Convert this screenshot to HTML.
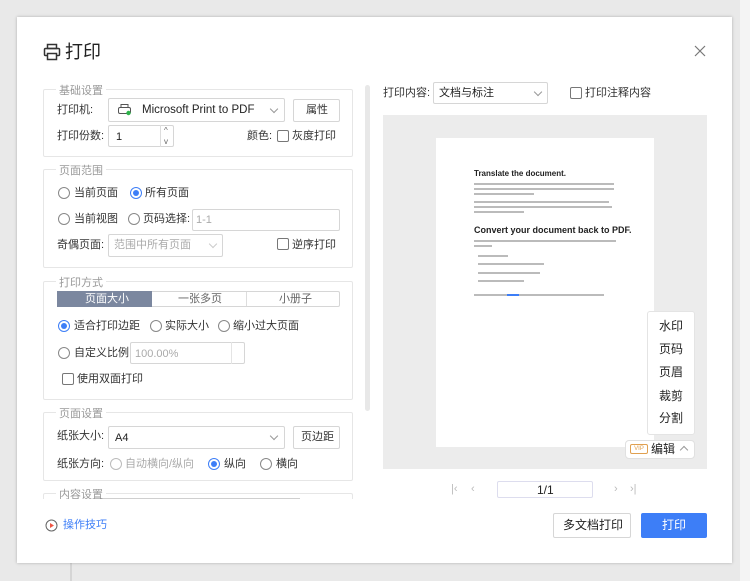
<!DOCTYPE html>
<html><head><meta charset="utf-8">
<style>
*{box-sizing:border-box;margin:0;padding:0}
body{width:750px;height:581px;background:#e9e9e9;position:relative;overflow:hidden;font-family:"Liberation Sans","Noto Sans CJK SC",sans-serif;font-size:11px;color:#333}
.a{position:absolute}
.dlg{left:17px;top:17px;width:715px;height:546px;background:#fff;box-shadow:0 0 3px rgba(0,0,0,.25)}
.fs{position:absolute;border:1px solid #e6e6e6;border-radius:2px}
.lg{position:absolute;top:-8px;left:12px;background:#fff;padding:0 3px;color:#999;font-size:11px}
.box{position:absolute;border:1px solid #d6d6d6;border-radius:2px;background:#fff}
.rad{position:absolute;width:12px;height:12px;border:1px solid #888;border-radius:50%;background:#fff}
.rad.on{border-color:#3d7ef7}
.rad.on::after{content:"";position:absolute;left:2px;top:2px;width:6px;height:6px;border-radius:50%;background:#3d7ef7}
.cb{position:absolute;width:12px;height:12px;border:1px solid #777;border-radius:2px;background:#fff}
.chev{position:absolute;width:6px;height:6px;border-right:1px solid #999;border-bottom:1px solid #999;transform:rotate(45deg)}
.t{position:absolute;white-space:nowrap;line-height:12px}
.g{color:#aaa}
.bar{position:absolute;height:1.6px;background:#bbb}
</style></head><body>
<div class="a" style="left:70px;top:563px;width:2px;height:18px;background:#d5d5d5"></div>
<div class="a" style="left:740px;top:0;width:10px;height:581px;background:#f4f4f4"></div>
<div class="a dlg"></div>

<svg class="a" style="left:43px;top:43px" width="18" height="18" viewBox="0 0 18 18" fill="none" stroke="#333" stroke-width="1.5"><rect x="4.5" y="1.5" width="9" height="4"/><rect x="1.5" y="5.5" width="15" height="7" rx="1"/><rect x="4.5" y="10.5" width="9" height="6" fill="#fff"/></svg>
<div class="t" style="left:65px;top:42px;font-size:18px;line-height:20px;color:#222">打印</div>
<svg class="a" style="left:694px;top:45px" width="12" height="12" viewBox="0 0 12 12" stroke="#777" stroke-width="1.2"><path d="M1 1L11 11M11 1L1 11"/></svg>

<div class="fs" style="left:43px;top:89px;width:310px;height:68px"><div class="lg">基础设置</div></div>
<div class="t" style="left:57px;top:104px">打印机:</div>
<div class="box" style="left:108px;top:98px;width:177px;height:24px"></div>
<svg class="a" style="left:118px;top:104px" width="14" height="12" viewBox="0 0 14 12"><rect x="3" y="0.5" width="7" height="3" fill="none" stroke="#555"/><rect x="0.5" y="3.5" width="12" height="6" rx="1.5" fill="none" stroke="#555"/><circle cx="10.5" cy="9" r="2.2" fill="#2db34a"/></svg>
<div class="t" style="left:142px;top:104px;font-size:11.5px;color:#222">Microsoft Print to PDF</div>
<div class="chev" style="left:271px;top:106px"></div>
<div class="box" style="left:293px;top:99px;width:47px;height:23px"></div>
<div class="t" style="left:306px;top:104px">属性</div>
<div class="t" style="left:57px;top:130px">打印份数:</div>
<div class="box" style="left:108px;top:125px;width:66px;height:22px"></div>
<div class="a" style="left:160px;top:125px;width:1px;height:22px;background:#ddd"></div>
<div class="t" style="left:116px;top:131px;color:#222">1</div>
<div class="t" style="left:164px;top:125px;font-size:8px;color:#666">^</div>
<div class="t" style="left:164px;top:136px;font-size:8px;color:#666">v</div>
<div class="t" style="left:247px;top:130px">颜色:</div>
<div class="cb" style="left:277px;top:130px"></div>
<div class="t" style="left:292px;top:130px">灰度打印</div>

<div class="fs" style="left:43px;top:169px;width:310px;height:99px"><div class="lg">页面范围</div></div>
<div class="rad" style="left:58px;top:187px"></div><div class="t" style="left:74px;top:187px">当前页面</div>
<div class="rad on" style="left:130px;top:187px"></div><div class="t" style="left:145px;top:187px">所有页面</div>
<div class="rad" style="left:58px;top:213px"></div><div class="t" style="left:74px;top:213px">当前视图</div>
<div class="rad" style="left:128px;top:213px"></div><div class="t" style="left:143px;top:213px">页码选择:</div>
<div class="box" style="left:192px;top:209px;width:148px;height:22px"></div>
<div class="t g" style="left:196px;top:214px">1-1</div>
<div class="t" style="left:57px;top:239px">奇偶页面:</div>
<div class="box" style="left:108px;top:234px;width:115px;height:23px"></div>
<div class="t g" style="left:114px;top:239px">范围中所有页面</div>
<div class="chev" style="left:210px;top:241px;border-color:#ccc"></div>
<div class="cb" style="left:277px;top:238px"></div><div class="t" style="left:292px;top:239px">逆序打印</div>

<div class="fs" style="left:43px;top:281px;width:310px;height:119px"><div class="lg">打印方式</div></div>
<div class="box" style="left:57px;top:291px;width:283px;height:16px"></div>
<div class="a" style="left:57px;top:291px;width:95px;height:16px;background:#7b879f"></div>
<div class="a" style="left:246px;top:292px;width:1px;height:14px;background:#ddd"></div>
<div class="t" style="left:85px;top:293px;color:#fff">页面大小</div>
<div class="t" style="left:178px;top:293px;color:#666">一张多页</div>
<div class="t" style="left:279px;top:293px;color:#666">小册子</div>
<div class="rad on" style="left:58px;top:320px"></div><div class="t" style="left:74px;top:320px">适合打印边距</div>
<div class="rad" style="left:150px;top:320px"></div><div class="t" style="left:165px;top:320px">实际大小</div>
<div class="rad" style="left:218px;top:320px"></div><div class="t" style="left:233px;top:320px">缩小过大页面</div>
<div class="rad" style="left:58px;top:347px"></div><div class="t" style="left:74px;top:347px">自定义比例</div>
<div class="box" style="left:130px;top:342px;width:115px;height:22px"></div>
<div class="a" style="left:231px;top:342px;width:1px;height:22px;background:#e4e4e4"></div>
<div class="t g" style="left:135px;top:348px">100.00%</div>
<div class="cb" style="left:62px;top:373px"></div><div class="t" style="left:77px;top:373px">使用双面打印</div>

<div class="fs" style="left:43px;top:412px;width:310px;height:69px"><div class="lg">页面设置</div></div>
<div class="t" style="left:57px;top:430px">纸张大小:</div>
<div class="box" style="left:108px;top:426px;width:177px;height:23px"></div>
<div class="t" style="left:115px;top:432px;color:#222">A4</div>
<div class="chev" style="left:271px;top:433px"></div>
<div class="box" style="left:293px;top:426px;width:47px;height:23px"></div>
<div class="t" style="left:301px;top:431px">页边距</div>
<div class="t" style="left:57px;top:458px">纸张方向:</div>
<div class="rad" style="left:110px;top:458px;border-color:#bbb"></div><div class="t g" style="left:125px;top:458px">自动横向/纵向</div>
<div class="rad on" style="left:208px;top:458px"></div><div class="t" style="left:224px;top:458px">纵向</div>
<div class="rad" style="left:260px;top:458px"></div><div class="t" style="left:276px;top:458px">横向</div>

<div class="fs" style="left:43px;top:493px;width:310px;height:10px;border-bottom:none"><div class="lg">内容设置</div></div>
<div class="a" style="left:40px;top:499px;width:320px;height:10px;background:#fff"></div>
<div class="a" style="left:100px;top:498px;width:200px;height:1px;background:#888;opacity:.4"></div>

<div class="a" style="left:365px;top:85px;width:5px;height:326px;background:#e8e8e8;border-radius:3px"></div>

<svg class="a" style="left:45px;top:519px" width="13" height="13" viewBox="0 0 13 13"><circle cx="6.5" cy="6.5" r="5.5" fill="none" stroke="#666"/><path d="M5 4v5l4-2.5z" fill="#e54"/></svg>
<div class="t" style="left:63px;top:519px;color:#3d7ef7">操作技巧</div>

<div class="t" style="left:383px;top:87px">打印内容:</div>
<div class="box" style="left:433px;top:82px;width:115px;height:22px"></div>
<div class="t" style="left:439px;top:87px;color:#222">文档与标注</div>
<div class="chev" style="left:535px;top:89px"></div>
<div class="cb" style="left:570px;top:87px"></div><div class="t" style="left:585px;top:87px">打印注释内容</div>

<div class="a" style="left:383px;top:115px;width:324px;height:354px;background:#ececec"></div>
<div class="a" style="left:436px;top:138px;width:218px;height:309px;background:#fff"></div>
<div class="t" style="left:474px;top:168px;font-size:8px;font-weight:bold;color:#222">Translate the document.</div>
<div class="bar" style="left:474px;top:183px;width:140px"></div>
<div class="bar" style="left:474px;top:188px;width:140px"></div>
<div class="bar" style="left:474px;top:193px;width:60px"></div>
<div class="bar" style="left:474px;top:201px;width:135px"></div>
<div class="bar" style="left:474px;top:206px;width:138px"></div>
<div class="bar" style="left:474px;top:211px;width:50px"></div>
<div class="t" style="left:474px;top:224px;font-size:9px;font-weight:bold;color:#222">Convert your document back to PDF.</div>
<div class="bar" style="left:474px;top:240px;width:142px"></div>
<div class="bar" style="left:474px;top:245px;width:18px"></div>
<div class="bar" style="left:478px;top:255px;width:30px"></div>
<div class="bar" style="left:478px;top:263px;width:66px"></div>
<div class="bar" style="left:478px;top:272px;width:62px"></div>
<div class="bar" style="left:478px;top:280px;width:46px"></div>
<div class="bar" style="left:474px;top:294px;width:130px"></div>
<div class="a" style="left:507px;top:294px;width:12px;height:1.6px;background:#3d7ef7"></div>

<div class="a" style="left:647px;top:311px;width:48px;height:124px;background:#fff;border:1px solid #e4e4e4;border-radius:3px"></div>
<div class="t" style="left:659px;top:320px;font-size:12px;color:#222">水印</div>
<div class="t" style="left:659px;top:343px;font-size:12px;color:#222">页码</div>
<div class="t" style="left:659px;top:366px;font-size:12px;color:#222">页眉</div>
<div class="t" style="left:659px;top:390px;font-size:12px;color:#222">裁剪</div>
<div class="t" style="left:659px;top:412px;font-size:12px;color:#222">分割</div>
<div class="a" style="left:625px;top:440px;width:70px;height:19px;background:#fff;border:1px solid #e0e0e0;border-radius:4px"></div>
<div class="t" style="left:630px;top:444px;width:18px;height:10px;border:1px solid #e0a050;border-radius:2px;font-size:6px;line-height:8px;color:#e0a050;text-align:center">VIP</div>
<div class="t" style="left:651px;top:443px;font-size:12px;color:#222">编辑</div>
<div class="chev" style="left:681px;top:447px;transform:rotate(225deg)"></div>

<div class="t" style="left:451px;top:483px;color:#bbb">|‹</div>
<div class="t" style="left:471px;top:483px;color:#bbb">‹</div>
<div class="box" style="left:497px;top:481px;width:96px;height:17px;border-color:#dde"></div>
<div class="t" style="left:537px;top:484px;font-size:12px;color:#222">1/1</div>
<div class="t" style="left:614px;top:483px;color:#bbb">›</div>
<div class="t" style="left:630px;top:483px;color:#bbb">›|</div>

<div class="box" style="left:553px;top:513px;width:78px;height:25px"></div>
<div class="t" style="left:563px;top:519px;font-size:12px;color:#222">多文档打印</div>
<div class="a" style="left:641px;top:513px;width:66px;height:25px;background:#3d7ef7;border-radius:2px"></div>
<div class="t" style="left:662px;top:519px;font-size:12px;color:#fff">打印</div>
</body></html>
